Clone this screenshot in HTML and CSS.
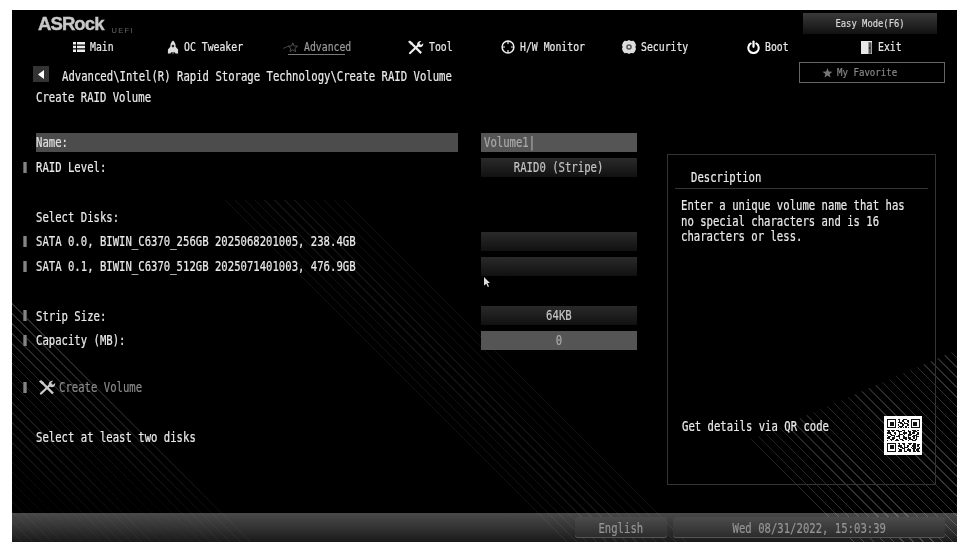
FILE: index.html
```html
<!DOCTYPE html>
<html lang="en">
<head>
<meta charset="UTF-8" />
<meta name="viewport" content="width=device-width, initial-scale=1" />
<title>ASRock UEFI - Create RAID Volume</title>
<link rel="stylesheet" href="styles.css">
</head>
<body>
  <div class="screen">
    <!-- faint diagonal line pattern behind everything -->
    <div class="hatch hatch-left"></div>
    <div class="hatch hatch-mid"></div>
    <div class="hatch hatch-right"></div>

    <header class="top">
      <div class="brand-row">
        <div class="brand"><span class="logo">ASRock</span><span class="uefi">UEFI</span></div>
        <button class="easy"><span class="t">Easy Mode(F6)</span></button>
      </div>

      <nav class="nav">
        <a class="nav-item">
          <svg class="ico" width="12" height="12" viewBox="0 0 12 12"><path fill="#eee" d="M0 1h3v2.4H0zM4 1h8v2.4H4zM0 4.8h3v2.4H0zM4 4.8h8v2.4H4zM0 8.6h3V11H0zM4 8.6h8V11H4z"/></svg>
          <span class="t">Main</span>
        </a>
        <a class="nav-item">
          <svg class="ico" width="12" height="15" viewBox="0 0 13 15"><path fill="#ddd" d="M6.5 0C8.6 1.8 9.4 4 9.4 6.6l2.6 3.2V14H9.2l-.8-1.4H4.6L3.8 14H1V9.8l2.6-3.2C3.6 4 4.400 1.800 6.500 0z"/><circle cx="6.5" cy="6" r="1.400" fill="#222"/><path fill="#777" d="M5 12.600h3l-1.500 2.400z"/></svg>
          <span class="t">OC Tweaker</span>
        </a>
        <a class="nav-item nav-active">
          <svg class="ico" width="16" height="13" viewBox="0 0 17 13"><path fill="none" stroke="#666" stroke-width=".8" d="M10.500 1.500l1.300 3.400 3.700.2-2.900 2.300 1 3.500-3.100-2-3.100 2 1-3.500-2.900-2.300 3.700-.2z"/><path stroke="#555" stroke-width=".8" d="M0 7.500l6-2.500"/></svg>
          <span class="t">Advanced</span>
        </a>
        <a class="nav-item">
          <svg class="ico" width="16" height="15" viewBox="0 0 17 15"><path fill="none" stroke="#eee" stroke-width="2.200" stroke-linecap="round" d="M2 13.500L11.500 4.500"/><path fill="#eee" d="M10 5.500c-1-2.500.8-5 4.200-4.800L12 3l1.800 1.900 2.400-2c.4 3-2 4.700-4.600 4.200z"/><path fill="none" stroke="#eee" stroke-width="2.400" d="M3 2.500l11 11"/><path fill="#eee" d="M0 1.500L2 0l3 2.500-1.800 2z"/></svg>
          <span class="t">Tool</span>
        </a>
        <a class="nav-item">
          <svg class="ico" width="14" height="14" viewBox="0 0 14 14"><circle cx="7" cy="7" r="5.900" fill="none" stroke="#eee" stroke-width="1.500"/><path stroke="#eee" stroke-width="1.200" d="M7 1v3M7 10v3M1 7h3M10 7h3"/></svg>
          <span class="t">H/W Monitor</span>
        </a>
        <a class="nav-item">
          <svg class="ico" width="14" height="14" viewBox="0 0 14 14"><path fill="#ddd" d="M7 0l2 1 2.400-.3L13 2.600 14 5l-.6 2 .6 2-1 2.400-1.600 1.900L9 13l-2 1-2-1-2.400.3L1 11.400 0 9l.6-2L0 5l1-2.400L2.600.7 5 1z"/><circle cx="7" cy="7" r="2.800" fill="#555"/><circle cx="7" cy="7" r="1.300" fill="#ddd"/></svg>
          <span class="t">Security</span>
        </a>
        <a class="nav-item">
          <svg class="ico" width="13" height="14" viewBox="0 0 14 14"><path fill="none" stroke="#fff" stroke-width="2.200" stroke-linecap="round" d="M4 3.200a5.600 5.600 0 1 0 6 0"/><path stroke="#fff" stroke-width="2.400" stroke-linecap="round" d="M7 1.200v5.600"/></svg>
          <span class="t">Boot</span>
        </a>
        <a class="nav-item">
          <svg class="ico" width="13" height="15" viewBox="0 0 13 15"><path fill="#e8e8e8" d="M1 1h11v13H1z"/><path fill="#555" d="M8.500 2l3 .6v10.800l-3 .6z"/><path fill="#222" d="M9 7h1.200v2H9z"/></svg>
          <span class="t">Exit</span>
        </a>
      </nav>

      <div class="path-row">
        <div class="crumbs">
          <button class="back"><svg width="6" height="9" viewBox="0 0 6 9"><path fill="#fff" d="M6 0v9L0 4.500z"/></svg></button>
          <span class="t">Advanced\Intel(R) Rapid Storage Technology\Create RAID Volume</span>
        </div>
        <button class="favorite">
          <svg width="11" height="10" viewBox="0 0 11 10"><path fill="#777" d="M5.500 0l1.300 3.500 3.700.2-2.900 2.300 1 3.600-3.100-2-3.100 2 1-3.600L.5 3.700l3.700-.2z"/></svg>
          <span class="t">My Favorite</span>
        </button>
      </div>
      <div class="page-title"><span class="t">Create RAID Volume</span></div>
    </header>

    <main class="content">
      <section class="form">
        <div class="row row-selected">
          <span class="label"><span class="t">Name:</span></span>
          <span class="field field-active field-left"><span class="t">Volume1|</span></span>
        </div>
        <div class="row">
          <i class="mark"></i><span class="label"><span class="t">RAID Level:</span></span>
          <span class="field"><span class="t">RAID0 (Stripe)</span></span>
        </div>
        <div class="row row-spaced row-heading">
          <span class="label"><span class="t">Select Disks:</span></span>
        </div>
        <div class="row">
          <i class="mark"></i><span class="label"><span class="t">SATA 0.0, BIWIN_C6370_256GB 2025068201005, 238.4GB</span></span>
          <span class="field"></span>
        </div>
        <div class="row">
          <i class="mark"></i><span class="label"><span class="t">SATA 0.1, BIWIN_C6370_512GB 2025071401003, 476.9GB</span></span>
          <span class="field"></span>
        </div>
        <div class="row row-spaced">
          <i class="mark"></i><span class="label"><span class="t">Strip Size:</span></span>
          <span class="field"><span class="t">64KB</span></span>
        </div>
        <div class="row">
          <i class="mark"></i><span class="label"><span class="t">Capacity (MB):</span></span>
          <span class="field field-active"><span class="t">0</span></span>
        </div>
        <div class="row row-create">
          <i class="mark"></i>
          <span class="label label-dim">
            <svg class="create-ico" width="17" height="15" viewBox="0 0 17 15"><path fill="none" stroke="#ccc" stroke-width="2.200" stroke-linecap="round" d="M2 13.500L11.500 4.500"/><path fill="#ccc" d="M10 5.500c-1-2.500.8-5 4.200-4.800L12 3l1.800 1.900 2.400-2c.4 3-2 4.700-4.600 4.200z"/><path fill="none" stroke="#ccc" stroke-width="2.400" d="M3 2.500l11 11"/><path fill="#ccc" d="M0 1.500L2 0l3 2.500-1.800 2z"/></svg>
            <span class="t">Create Volume</span>
          </span>
        </div>
        <div class="row row-note">
          <span class="label"><span class="t">Select at least two disks</span></span>
        </div>
      </section>

      <aside class="desc">
        <h2 class="desc-title"><span class="t">Description</span></h2>
        <p class="desc-text">
          <span class="t">Enter a unique volume name that has</span>
          <span class="t">no special characters and is 16</span>
          <span class="t">characters or less.</span>
        </p>
        <div class="qr-row">
          <span class="t">Get details via QR code</span>
          <div class="qr">
            <svg width="33" height="33" viewBox="0 0 25 25" shape-rendering="crispEdges">
              <path fill="#111" d="M0 0h7v7H0zM18 0h7v7h-7zM0 18h7v7H0z"/>
              <path fill="#fff" d="M1 1h5v5H1zM19 1h5v5h-5zM1 19h5v5H1z"/>
              <path fill="#111" d="M2 2h3v3H2zM20 2h3v3h-3zM2 20h3v3H2z"/>
              <path fill="none" stroke="#111" d="M8 .5h2m2 0h3M9 1.500h1m1 0h2m2 0h2M8 2.500h3m2 0h1m2 0h1M10 3.500h2m1 0h3M8 4.500h1m2 0h2m2 0h2M9 5.500h3m2 0h1M8 6.500h1m1 0h1m1 0h1m1 0h1m1 0h1M0 8.500h2m1 0h3m1 0h2m2 0h3m2 0h1m2 0h3m1 0h1M1 9.500h1m2 0h1m3 0h3m2 0h1m2 0h2m2 0h3M0 10.500h3m2 0h2m2 0h1m2 0h3m2 0h1m1 0h2m2 0h1M2 11.500h2m2 0h1m2 0h3m1 0h1m2 0h3m3 0h2M0 12.500h1m2 0h3m2 0h2m2 0h1m3 0h2m2 0h3M1 13.500h2m2 0h1m1 0h3m2 0h2m2 0h1m2 0h2m1 0h2M0 14.500h2m2 0h2m3 0h1m2 0h3m1 0h2m2 0h1m1 0h1M2 15.500h3m2 0h1m2 0h2m2 0h1m2 0h3m1 0h2M0 16.500h1m2 0h1m2 0h3m2 0h2m3 0h1m2 0h3M8 18.500h2m1 0h3m2 0h3m1 0h2M9 19.500h1m2 0h2m3 0h1m2 0h2m1 0h2M8 20.500h3m2 0h1m1 0h2m2 0h3m1 0h1M10 21.500h2m1 0h3m2 0h1m1 0h2m2 0h1M8 22.500h1m2 0h3m2 0h1m2 0h3m1 0h2M9 23.500h2m2 0h1m1 0h3m2 0h1m1 0h2M8 24.500h3m2 0h2m2 0h1m2 0h2m1 0h2"/>
            </svg>
          </div>
        </div>
      </aside>
    </main>

    <footer class="bottom">
      <button class="foot-btn foot-lang"><span class="t">English</span></button>
      <button class="foot-btn foot-date"><span class="t">Wed 08/31/2022, 15:03:39</span></button>
    </footer>

    <!-- mouse pointer -->
    <svg class="cursor" width="7" height="11" viewBox="0 0 7 11"><path fill="#ddd" d="M0 0l6 6H3.500l1.500 3.500-1.200.5L2.400 6.700 0 8.500z"/></svg>
  </div>
</body>
</html>
```

FILE: styles.css
```css
/* Reset & base */
* {
  box-sizing: border-box;
}
html, body {
  margin: 0;
  height: 100%;
  background: #fff;
}
body {
  padding: 10px 12px 5px;
  overflow: hidden;
  font-family: 'DejaVu Sans Mono', monospace;
  font-size: 13.2px;
  color: #eaeaea;
}
button {
  font: inherit;
  color: inherit;
  border: none;
  padding: 0;
  cursor: pointer;
}

/* BIOS font is tall and narrow, squeeze the mono font to get there */
.t {
  display: inline-block;
  white-space: pre;
  transform: scaleX(0.805);
  transform-origin: left center;
  line-height: 15px;
  -webkit-text-stroke: 0.2px currentColor;
}

.screen {
  position: relative;
  width: 945px;
  height: 532px;
  background: #000;
  overflow: hidden;
  display: flex;
  flex-direction: column;
  filter: blur(0.35px);
}

/* Background lines */
.hatch {
  position: absolute;
  inset: 0;
  background: repeating-linear-gradient(45deg, rgba(255,255,255,0.2) 0 1px, transparent 1px 7px);
}
.hatch-left {
  clip-path: polygon(0 290px, 242px 532px, 0 532px);
  -webkit-mask-image: linear-gradient(rgba(0,0,0,0.9) 60%, rgba(0,0,0,0.12) 95%);
  mask-image: linear-gradient(rgba(0,0,0,0.9) 60%, rgba(0,0,0,0.12) 95%);
}
.hatch-mid {
  clip-path: polygon(205px 190px, 338px 190px, 680px 532px, 547px 532px);
  opacity: 0.35;
}
.hatch-right {
  clip-path: polygon(738px 430px, 945px 340px, 945px 532px, 840px 532px);
  -webkit-mask-image: linear-gradient(135deg, transparent 62%, #000 90%);
  mask-image: linear-gradient(135deg, transparent 62%, #000 90%);
}

/* Header */
.top, .content, .bottom {
  position: relative;
}
.top {
  height: 120px;
}
.brand-row {
  display: flex;
  justify-content: space-between;
  height: 29px;
  padding: 3px 20px 0 26px;
}
.brand {
  display: flex;
  align-items: flex-start;
  gap: 8px;
}
.logo {
  font-family: 'Liberation Sans', sans-serif;
  font-weight: bold;
  font-size: 18.5px;
  line-height: 21px;
  letter-spacing: -0.9px;
  color: #c8c8c8;
  -webkit-text-stroke: 0.4px #c8c8c8;
}
.uefi {
  font-family: 'Liberation Sans', sans-serif;
  font-size: 7.5px;
  letter-spacing: 1.3px;
  color: #666;
  margin-top: 13px;
}
.easy {
  width: 134px;
  height: 21px;
  font-size: 11px;
  background: linear-gradient(#3a3a3a, #111);
  color: #d8d8d8;
}
.easy .t {
  transform-origin: center;
}

.nav {
  display: grid;
  grid-template-columns: 94px 116px 125px 93px 121px 125px 113px 1fr;
  height: 28px;
  padding-left: 61px;
  margin-top: -1px;
  font-size: 12.2px;
}
.nav-item {
  position: relative;
  display: flex;
  align-items: center;
  gap: 4.5px;
  height: 18px;
}
.nav-item .ico {
  flex: none;
}
.nav-active {
  color: #9a9a9a;
}
.nav-active::after {
  content: "";
  position: absolute;
  left: 5px;
  top: 16px;
  width: 57px;
  height: 1px;
  background: #777;
}

.path-row {
  display: flex;
  justify-content: space-between;
  height: 21px;
  padding: 0 12px 0 21px;
  margin-top: -4px;
}
.crumbs {
  display: flex;
  align-items: flex-start;
  gap: 13px;
  padding-top: 4px;
}
.crumbs > .t {
  margin-top: 3px;
}
.back {
  width: 16px;
  height: 16px;
  background: #333;
  display: flex;
  align-items: center;
  justify-content: center;
}
.favorite {
  width: 146px;
  height: 21px;
  border: 1px solid #666;
  background: transparent;
  color: #888;
  font-size: 11.3px;
  display: flex;
  align-items: center;
  padding-left: 22px;
  gap: 4px;
}
.page-title {
  padding-left: 24px;
  margin-top: 7px;
}

/* Content */
.content {
  display: grid;
  grid-template-columns: 655px 269px;
  flex: 1;
}
.row {
  position: relative;
  display: flex;
  align-items: center;
  height: 24.75px;
  padding-left: 24px;
}
.row-spaced {
  margin-top: 24.75px;
}
.row-heading .label {
  padding-top: 1px;
}
.row-create {
  margin-top: 22px;
}
.row-note {
  margin-top: 25px;
}
.mark {
  position: absolute;
  left: 11px;
  top: 7px;
  width: 4px;
  height: 11px;
  background: linear-gradient(90deg, #444, #9a9a9a, #444);
}
.label {
  display: flex;
  align-items: center;
  width: 445px;
  height: 19px;
  padding-top: 1px;
}
.label-dim {
  color: #8a8a8a;
  gap: 3px;
  padding-left: 3px;
}
.row-selected .label {
  width: 422px;
  margin-right: 23px;
  background: #4c4c4c;
  color: #e0e0e0;
}
.field {
  width: 156px;
  height: 19px;
  text-align: center;
  color: #c4c4c4;
  background: linear-gradient(#2a2a2a, #111);
}
.field .t {
  transform-origin: center;
  line-height: 20px;
}
.field-active {
  background: #555;
  color: #aaa;
}
.field-left {
  text-align: left;
  padding-left: 3px;
}
.field-left .t {
  transform-origin: left center;
}

.desc {
  display: flex;
  flex-direction: column;
  height: 331px;
  margin-top: 24px;
  border: 1px solid #333;
}
.desc-title {
  margin: 15px 7px 0;
  padding: 0 0 3px 16px;
  font-size: inherit;
  font-weight: normal;
  border-bottom: 1px solid #333;
  height: 19px;
}
.desc-text {
  margin: 9px 0 0 13px;
}
.desc-text .t {
  display: block;
  line-height: 15.5px;
}
.qr-row {
  display: flex;
  justify-content: space-between;
  margin: auto 13px 28px 14px;
  height: 40px;
}
.qr-row > .t {
  margin-top: 3px;
}
.qr {
  width: 38px;
  height: 39px;
  background: #fff;
  display: flex;
  align-items: center;
  justify-content: center;
}
.qr svg {
  display: block;
}

/* Footer */
.bottom {
  display: flex;
  justify-content: flex-end;
  align-items: flex-start;
  gap: 6px;
  height: 29px;
  padding: 4px 12px 0 0;
  background: linear-gradient(rgba(255,255,255,0.29), rgba(255,255,255,0.2) 50%, rgba(255,255,255,0.1));
}
.foot-btn {
  height: 21px;
  padding-top: 2px;
  border-radius: 3px;
  background: linear-gradient(#4c4c4c, #3a3a3a 55%, #2a2a2a);
  color: #949494;
  box-shadow: inset 0 -1px 0 #555;
}
.foot-btn .t {
  transform-origin: center;
}
.foot-lang {
  width: 92px;
}
.foot-date {
  width: 272px;
}

.cursor {
  position: absolute;
  left: 472px;
  top: 267px;
}
```
